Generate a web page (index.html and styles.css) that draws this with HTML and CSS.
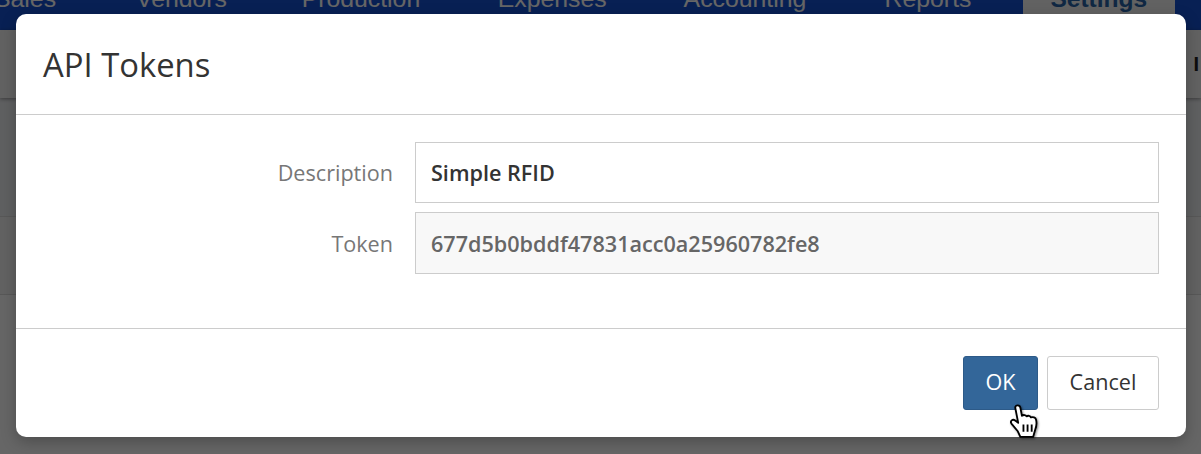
FILE: index.html
```html
<!DOCTYPE html>
<html lang="en">
<head>
  <meta charset="UTF-8" />
  <title>API Tokens</title>
  <link rel="stylesheet" href="styles.css">
</head>
<body>

<div class="page">
  <nav class="menu">
    <a class="sales">Sales</a>
    <a class="vendors">Vendors</a>
    <a class="production">Production</a>
    <a class="expenses">Expenses</a>
    <a class="accounting">Accounting</a>
    <a class="reports">Reports</a>
    <a class="settings">Settings</a>
  </nav>
  <div class="toolbar"><span class="toolbar-end">I</span></div>
  <div class="panel panel-top"></div>
  <div class="panel panel-mid"></div>
  <div class="panel panel-rest"></div>
</div>

<div class="overlay"></div>

<div class="modal">
  <div class="modal-header">
    <h2>API Tokens</h2>
  </div>
  <form class="modal-body">
    <div class="row">
      <label for="description">Description</label>
      <input type="text" id="description" value="Simple RFID" />
    </div>
    <div class="row">
      <label for="token">Token</label>
      <input type="text" id="token" value="677d5b0bddf47831acc0a25960782fe8" readonly />
    </div>
  </form>
  <div class="modal-footer">
    <button type="button" class="btn btn-primary">OK</button>
    <button type="button" class="btn">Cancel</button>
  </div>
</div>

<svg class="cursor" width="32" height="37" viewBox="0 0 30 36">
  <path d="M5.5 4.500c0-3 4.500-3 5 0l1.500 8c1.500-1.200 3.500-1 4.500.5 1.500-1 3.500-.6 4.200 1 2-.8 4.500 0 5 2 .8 3 .4 7-.8 10l-2 7H10.500L8 27.500 1.800 20c-1.600-2.500 1.200-4.800 3.600-3l3 2.300z" fill="#fff" stroke="#000" stroke-width="1.800" stroke-linejoin="round"/>
  <path d="M13.500 21v7M17.500 21v7M21.500 21v7" fill="none" stroke="#000" stroke-width="1.800"/>
</svg>

</body>
</html>
```

FILE: styles.css
```css
* {
  box-sizing: border-box;
}

html, body {
  height: 100%;
}

body {
  margin: 0;
  overflow: hidden;
  font-family: "Open Sans", sans-serif;
  background: #fff;
}

.page {
  height: 454px;
  overflow: hidden;
}

.menu {
  display: flex;
  align-items: flex-start;
  height: 30px;
  overflow: hidden;
  background: #1652d2;
  font-family: "Liberation Sans", Arial, sans-serif;
  font-size: 24.8px;
  line-height: 18px;
  color: #fff;
}

.menu a {
  display: block;
  height: 40px;
  margin-top: -10px;
}

.sales { margin-left: -6px; }
.vendors { margin-left: 80px; }
.production { margin-left: 74.6px; }
.expenses { margin-left: 77.5px; }
.accounting { margin-left: 77px; }
.reports { margin-left: 78.3px; }

.settings {
  width: 152px;
  margin-left: 52px;
  padding-left: 27px;
  background: #f4f4f4;
  color: #2a64a8;
  font-size: 24.5px;
  font-weight: bold;
}

.toolbar {
  position: relative;
  display: flex;
  justify-content: flex-end;
  align-items: center;
  height: 68px;
  padding-right: 2px;
  background: #f4f4f4;
  box-shadow: 0 1px 4px rgba(0, 0, 0, 0.4);
  color: #222;
  font-family: "Liberation Sans", Arial, sans-serif;
  font-size: 20px;
  font-weight: bold;
}

.panel-top {
  height: 119px;
  background: #eef0f3;
  border-bottom: 1px solid #ddd;
}

.panel-mid {
  height: 78px;
  background: #f6f6f6;
  border-bottom: 1px solid #ddd;
}

.overlay {
  position: absolute;
  inset: 0;
  background: rgba(0, 0, 0, 0.6);
}

.modal {
  position: absolute;
  left: 16px;
  top: 14px;
  width: 1170px;
  height: 423px;
  display: flex;
  flex-direction: column;
  background: #fff;
  border-radius: 10px;
  box-shadow: 0 5px 15px rgba(0, 0, 0, 0.25);
}

.modal-header {
  height: 101px;
  padding: 28px 27px 0;
  border-bottom: 1px solid #ccc;
}

h2 {
  margin: 0;
  font-size: 32.8px;
  font-weight: 400;
  line-height: 46px;
  color: #333;
}

.modal-body {
  height: 214px;
  padding: 27px 27px 0 0;
  border-bottom: 1px solid #ccc;
}

.row {
  display: flex;
  align-items: center;
  margin-bottom: 9px;
}

.row label {
  width: 377px;
  text-align: right;
  font-size: 21.6px;
  color: #777;
}

.row input {
  width: 744px;
  height: 61px;
  margin-left: 22px;
  padding: 0 15px;
  border: 1px solid #ccc;
  background: #fff;
  font-family: "Open Sans", sans-serif;
  font-size: 21.6px;
  font-weight: 600;
  color: #333;
}

#token {
  height: 62px;
  background: #f8f8f8;
  color: #666;
}

.modal-footer {
  display: flex;
  justify-content: flex-end;
  gap: 9px;
  padding: 27px 27px 0 0;
}

.btn {
  height: 54px;
  width: 112px;
  padding: 0 0 3px;
  border: 1px solid #ccc;
  border-radius: 3px;
  background: #fff;
  font-family: "Open Sans", sans-serif;
  font-size: 21.6px;
  color: #333;
}

.btn-primary {
  width: 75px;
  background: #336699;
  border-color: #2d5a88;
  color: #fff;
}

.cursor {
  position: absolute;
  left: 1009px;
  top: 403px;
  filter: drop-shadow(1px 1px 1px rgba(0, 0, 0, 0.45));
}
```
